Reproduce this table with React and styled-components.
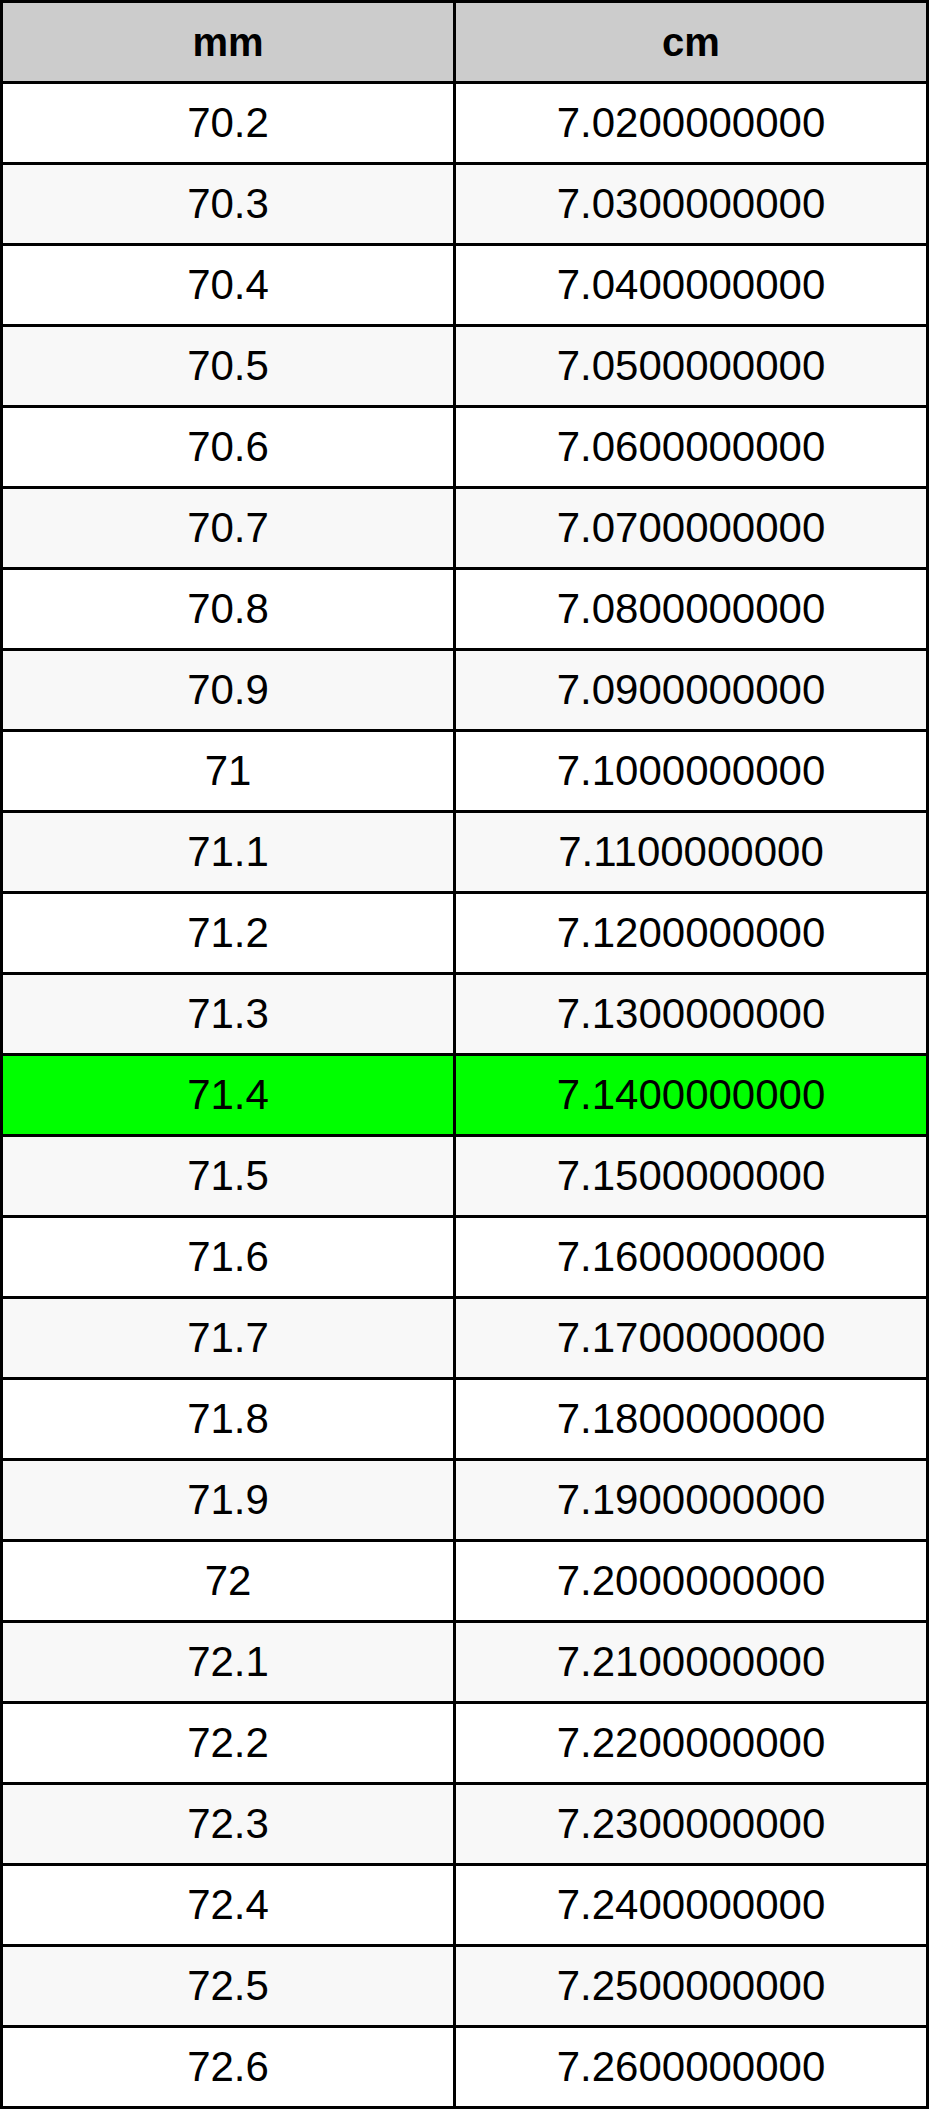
import React from 'react'
import styled, { createGlobalStyle } from 'styled-components';

const GlobalStyle = createGlobalStyle`
    body {
        margin: 0;
        background: #ffffff;
        font-family: "Liberation Sans", Arial, sans-serif;
    }
`

const Table = styled.table`
    width: 929px;
    table-layout: fixed;
    border-collapse: separate;
    border-spacing: 0;
    border-top: 3px solid #000;
    border-left: 3px solid #000;
    font-family: "Liberation Sans", Arial, sans-serif;
    font-size: 42px;
    color: #000;
`

const Col = styled.col`
    width: ${props => props.width}px;
`

const HeadCell = styled.th`
    box-sizing: border-box;
    height: 81px;
    padding: 0;
    text-align: center;
    vertical-align: middle;
    font-weight: bold;
    font-size: 40px;
    background-color: #cccccc;
    border-right: 3px solid #000;
    border-bottom: 3px solid #000;
`

const Row = styled.tr`
    background-color: ${props => props.$highlight ? '#00ff00' : props.$striped ? '#f8f8f8' : '#ffffff'};
`

const Cell = styled.td`
    box-sizing: border-box;
    height: 81px;
    padding: 0;
    text-align: center;
    vertical-align: middle;
    border-right: 3px solid #000;
    border-bottom: 3px solid #000;
`

const values = [
    '70.2', '70.3', '70.4', '70.5', '70.6', '70.7', '70.8', '70.9', '71',
    '71.1', '71.2', '71.3', '71.4', '71.5', '71.6', '71.7', '71.8', '71.9', '72',
    '72.1', '72.2', '72.3', '72.4', '72.5', '72.6'
]

export default function App() {
    return (
        <>
            <GlobalStyle />
            <Table>
                <colgroup>
                    <Col width={453} />
                    <Col width={473} />
                </colgroup>
                <thead>
                    <tr>
                        <HeadCell>mm</HeadCell>
                        <HeadCell>cm</HeadCell>
                    </tr>
                </thead>
                <tbody>
                    {values.map((mm, i) => (
                        <Row key={mm} $striped={i % 2 === 1} $highlight={mm === '71.4'}>
                            <Cell>{mm}</Cell>
                            <Cell>{(parseFloat(mm) / 10).toFixed(10)}</Cell>
                        </Row>
                    ))}
                </tbody>
            </Table>
        </>
    )
}
